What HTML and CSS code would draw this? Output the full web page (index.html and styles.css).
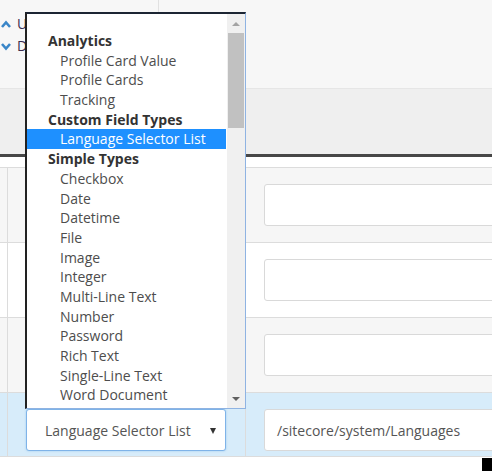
FILE: index.html
```html
<!DOCTYPE html>
<html>
<head>
<meta charset="utf-8">
<link rel="stylesheet" href="styles.css">
</head>
<body>
<div class="page">
  <div class="toolbar">
    <div class="tool-group">
      <div class="tool-btn">
        <svg class="chev" width="10" height="9" viewBox="0 0 10 9"><polyline points="1,7 5,2.5 9,7" fill="none" stroke="#3a86c8" stroke-width="2.6"/></svg>
        <span class="tool-label">Up</span>
      </div>
      <div class="tool-btn">
        <svg class="chev" width="10" height="9" viewBox="0 0 10 9"><polyline points="1,2 5,6.5 9,2" fill="none" stroke="#3a86c8" stroke-width="2.6"/></svg>
        <span class="tool-label">Down</span>
      </div>
    </div>
    <div class="tool-divider"></div>
  </div>
  <div class="thead"></div>
  <div class="spacer"></div>
  <div class="row striped">
    <div class="cell c0"></div>
    <div class="cell c1"></div>
    <div class="cell c2"><div class="input"></div></div>
  </div>
  <div class="row">
    <div class="cell c0"></div>
    <div class="cell c1"></div>
    <div class="cell c2"><div class="input"></div></div>
  </div>
  <div class="row striped">
    <div class="cell c0"></div>
    <div class="cell c1"></div>
    <div class="cell c2"><div class="input"></div></div>
  </div>
  <div class="row active last">
    <div class="cell c0"></div>
    <div class="cell c1">
      <div class="select"><span>Language Selector List</span><span class="arrow"></span></div>
    </div>
    <div class="cell c2"><div class="input"><span>/sitecore/system/Languages</span></div></div>
  </div>
</div>

<div class="dropdown">
  <div class="list">
    <div class="group">Analytics</div>
    <div class="opt">Profile Card Value</div>
    <div class="opt">Profile Cards</div>
    <div class="opt">Tracking</div>
    <div class="group">Custom Field Types</div>
    <div class="opt selected">Language Selector List</div>
    <div class="group">Simple Types</div>
    <div class="opt">Checkbox</div>
    <div class="opt">Date</div>
    <div class="opt">Datetime</div>
    <div class="opt">File</div>
    <div class="opt">Image</div>
    <div class="opt">Integer</div>
    <div class="opt">Multi-Line Text</div>
    <div class="opt">Number</div>
    <div class="opt">Password</div>
    <div class="opt">Rich Text</div>
    <div class="opt">Single-Line Text</div>
    <div class="opt">Word Document</div>
  </div>
  <div class="scrollbar">
    <div class="sb-arrow up"></div>
    <div class="sb-track"><div class="sb-thumb"></div></div>
    <div class="sb-arrow down"></div>
  </div>
</div>
<div class="cursor-block"></div>
</body>
</html>
```
FILE: styles.css
```css
* { box-sizing: border-box; }
html, body { margin: 0; padding: 0; }
body {
  width: 492px;
  height: 471px;
  overflow: hidden;
  position: relative;
  background: #fff;
  font-family: "Open Sans", "Liberation Sans", sans-serif;
  font-size: 14px;
  color: #333;
}
.page { width: 492px; }

.toolbar {
  height: 89px;
  background: #f7f7f7;
  border-bottom: 1px solid #e6e6e6;
  display: flex;
}
.tool-group {
  width: 158px;
  padding-top: 13px;
  display: flex;
  flex-direction: column;
}
.tool-btn {
  height: 22px;
  display: flex;
  align-items: center;
  gap: 6px;
  padding-left: 1px;
  color: #3b2d4f;
  line-height: 22px;
}
.tool-label { white-space: nowrap; }
.chev { display: block; flex: none; }
.tool-divider {
  width: 1px;
  background: #e1e1e1;
}

.thead {
  height: 68px;
  background: #efefef;
  border-bottom: 3px solid #474747;
}
.spacer {
  height: 11px;
  border-bottom: 1px solid #dcdcdc;
}

.row {
  display: grid;
  grid-template-columns: 8px 238px 1fr;
  border-bottom: 1px solid #dcdcdc;
  background: #fff;
}
.row.striped { background: #f6f6f6; }
.row.active { background: #d7ecfa; }
.cell { padding: 16px 0; }
.row.last .cell { padding-bottom: 5px; }
.c0 { border-right: 1px solid #dcdcdc; }
.c1 { border-right: 1px solid #dcdcdc; padding-left: 18px; }
.c2 { padding-left: 18px; overflow: hidden; }

.input {
  width: 260px;
  height: 42px;
  background: #fff;
  border: 1px solid #d9d9d9;
  border-radius: 3px;
  display: flex;
  align-items: center;
  padding-left: 12px;
  color: #555;
}

.select {
  width: 200px;
  height: 42px;
  background: #fff;
  border: 1px solid #7fb3e8;
  border-radius: 3px;
  box-shadow: 0 0 2px rgba(102, 175, 233, 0.6);
  display: flex;
  align-items: center;
  justify-content: space-between;
  padding: 0 9px 0 18px;
  color: #555;
}
.arrow {
  width: 0;
  height: 0;
  border-left: 3.5px solid transparent;
  border-right: 3.5px solid transparent;
  border-top: 6px solid #333;
  margin-top: 1px;
}

.dropdown {
  position: absolute;
  left: 25px;
  top: 12px;
  width: 221px;
  height: 397px;
  background: #fff;
  border-top: 2px solid #1c2533;
  border-left: 2px solid #222;
  border-right: 1px solid #8fb3e2;
  border-bottom: 1px solid #8fb3e2;
  display: flex;
  overflow: hidden;
}
.list {
  flex: 1;
  padding-top: 17px;
  overflow: hidden;
}
.group, .opt {
  height: 19.7px;
  line-height: 19.7px;
  white-space: nowrap;
}
.group {
  font-weight: 700;
  color: #333;
  padding-left: 21px;
}
.opt {
  color: #4d4d4d;
  padding-left: 33px;
}
.opt.selected {
  background: #1e90ff;
  color: #fff;
  margin-right: 1px;
}

.scrollbar {
  width: 18px;
  background: #f0f0f0;
  display: flex;
  flex-direction: column;
}
.sb-arrow {
  height: 19px;
  display: flex;
  justify-content: center;
  align-items: center;
}
.sb-arrow.up::before {
  content: "";
  border-left: 4px solid transparent;
  border-right: 4px solid transparent;
  border-bottom: 4px solid #a3a3a3;
}
.sb-arrow.down::before {
  content: "";
  border-left: 4px solid transparent;
  border-right: 4px solid transparent;
  border-top: 4px solid #606060;
}
.sb-track {
  flex: 1;
  padding: 0 1px;
}
.sb-thumb {
  height: 95px;
  background: #c1c1c1;
}

.cursor-block {
  position: absolute;
  left: 482px;
  top: 458px;
  width: 10px;
  height: 13px;
  background: #000;
}
```
